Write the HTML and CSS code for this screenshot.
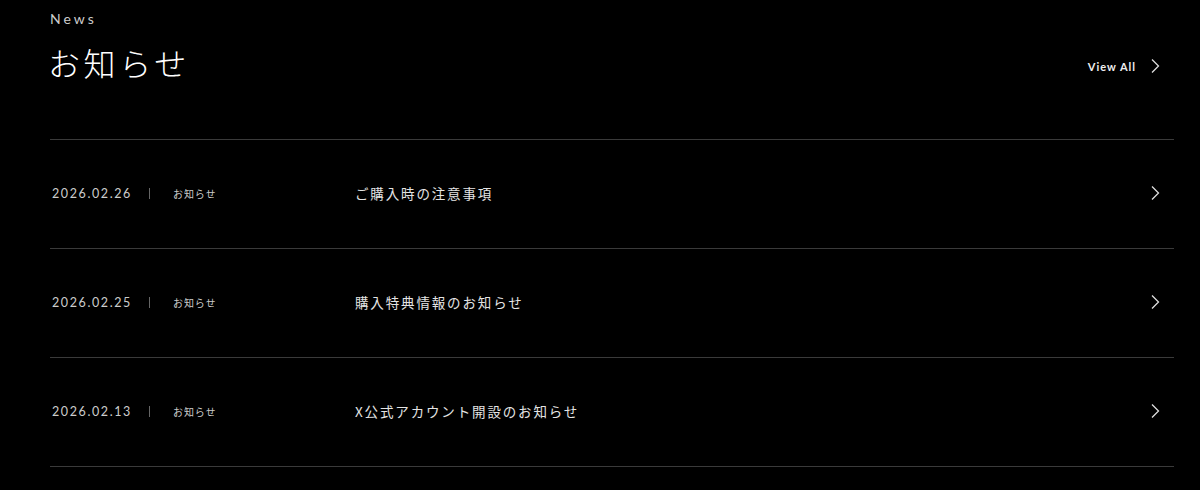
FILE: index.html
```html
<!DOCTYPE html>
<html lang="ja">
<head>
  <meta charset="UTF-8">
  <title>お知らせ</title>
  <link rel="stylesheet" href="styles.css">
</head>
<body>
  <section class="news">
    <div class="news-head">
      <div class="news-titles">
        <div class="news-en">News</div>
        <h2 class="news-ja">お知らせ</h2>
      </div>
      <a class="view-all" href="#">View All
        <svg class="chev" width="10" height="16" viewBox="0 0 10 16"><path d="M2 1.5 L8.5 8 L2 14.5" fill="none" stroke="#ddd" stroke-width="1.3"/></svg>
      </a>
    </div>

    <ul class="news-list">
      <li class="news-item">
        <span class="date">2026.02.26</span>
        <span class="sep"></span>
        <span class="cat">お知らせ</span>
        <span class="title">ご購入時の注意事項</span>
        <svg class="chev" width="10" height="16" viewBox="0 0 10 16"><path d="M2 1.5 L8.5 8 L2 14.5" fill="none" stroke="#ddd" stroke-width="1.3"/></svg>
      </li>
      <li class="news-item">
        <span class="date">2026.02.25</span>
        <span class="sep"></span>
        <span class="cat">お知らせ</span>
        <span class="title">購入特典情報のお知らせ</span>
        <svg class="chev" width="10" height="16" viewBox="0 0 10 16"><path d="M2 1.5 L8.5 8 L2 14.5" fill="none" stroke="#ddd" stroke-width="1.3"/></svg>
      </li>
      <li class="news-item">
        <span class="date">2026.02.13</span>
        <span class="sep"></span>
        <span class="cat">お知らせ</span>
        <span class="title">X公式アカウント開設のお知らせ</span>
        <svg class="chev" width="10" height="16" viewBox="0 0 10 16"><path d="M2 1.5 L8.5 8 L2 14.5" fill="none" stroke="#ddd" stroke-width="1.3"/></svg>
      </li>
    </ul>
  </section>
</body>
</html>
```

FILE: styles.css
```css
body { margin: 0; background: #000; color: #ddd; font-family: "Lato", "Noto Sans CJK JP", sans-serif; }
.news { padding: 10px 26px 0 50px; }
.news-head { display: flex; justify-content: space-between; height: 129px; align-items: flex-start; }
.news-en { font-size: 14px; letter-spacing: 3px; color: #ccc; line-height: 18px; }
.news-ja { margin: 14px 0 0 -2px; font-size: 32px; font-weight: 300; letter-spacing: 3.6px; color: #fff; line-height: 40px; font-family: "Noto Sans CJK JP", sans-serif; }
.view-all { display: flex; align-items: center; gap: 14px; margin-top: 48px; padding-right: 14px; color: #eee; text-decoration: none; font-size: 11px; font-weight: 700; letter-spacing: 1px; }
.news-list { list-style: none; margin: 0; padding: 0; border-top: 1px solid #3a3a3a; }
.news-item { display: flex; align-items: center; height: 108px; border-bottom: 1px solid #3a3a3a; padding-left: 2px; padding-right: 14px; padding-bottom: 2px; box-sizing: border-box; height: 109px; }
.date { width: 97px; font-size: 12.5px; letter-spacing: 1.6px; color: #ccc; }
.sep { width: 1px; height: 11px; background: #666; margin-right: 23px; }
.cat { width: 182px; font-size: 10px; letter-spacing: 0.9px; color: #ccc; font-family: "Noto Sans CJK JP", sans-serif; }
.title { flex: 1; font-size: 13.5px; letter-spacing: 1.85px; color: #e4e4e4; font-family: "Noto Sans CJK JP", sans-serif; }
.chev { display: block; }
```
